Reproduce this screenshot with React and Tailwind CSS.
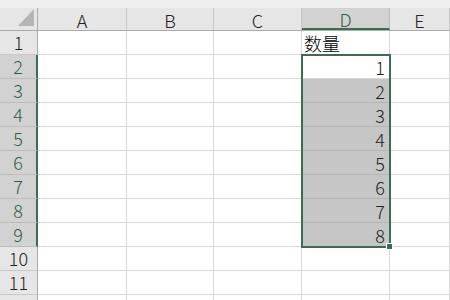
import React from "react";

const cols = ["A", "B", "C", "D", "E"];
const colW = ["w-[89px]", "w-[87px]", "w-[88px]", "w-[88px]", "flex-1"];
const rows = [1, 2, 3, 4, 5, 6, 7, 8, 9, 10, 11, 12];
const font = { fontFamily: '"Noto Sans CJK SC", "Noto Sans", sans-serif' };

function Cell({ row, col }) {
  const inSel = col === 3 && row >= 2 && row <= 9;
  const grey = col === 3 && row >= 3 && row <= 9;
  let content = null;
  if (col === 3 && row === 1) content = <span className="pl-[2px] text-[18px] leading-[22px] text-black">数量</span>;
  if (inSel) content = <span className="ml-auto pr-[4px] text-[18px] leading-[22px] text-[#222]">{row - 1}</span>;
  return (
    <div
      className={`${colW[col]} h-full flex items-end border-r border-[#d9d9d9] ${grey ? "bg-[#c6c6c6] border-b border-b-[#b4b4b4]" : "bg-white border-b border-b-[#d9d9d9]"}`}
    >
      {content}
    </div>
  );
}

export default function App() {
  return (
    <div className="relative w-[450px] h-[300px] overflow-hidden bg-white select-none font-light" style={font}>
      {/* strip above headers */}
      <div className="h-[8px] bg-[#efefef]" />
      {/* column headers */}
      <div className="flex h-[23px] bg-[#e6e6e6] border-b border-[#ababab]">
        <div className="w-[38px] h-full border-r border-[#ababab] flex items-end justify-end pr-[3px] pb-[4px]">
          <div className="w-0 h-0 border-l-[16px] border-l-transparent border-b-[17px] border-b-[#b5b5b5]" />
        </div>
        {cols.map((c, i) => (
          <div
            key={c}
            className={`${colW[i]} h-full flex items-center justify-center pt-[3px] border-r text-[18px] ${i === 3 ? "bg-[#d2d2d2] text-[#2f5f46] border-[#bdbdbd] border-b-2 border-b-[#3d6b53]" : "text-[#222] border-[#c8c8c8]"}`}
          >
            {c}
          </div>
        ))}
      </div>
      {/* rows */}
      {rows.map((r) => {
        const sel = r >= 2 && r <= 9;
        return (
          <div key={r} className="flex h-[24px]">
            <div
              className={`w-[38px] h-full flex items-center justify-center text-[18px] border-b ${sel ? "bg-[#d2d2d2] text-[#2f5f46] border-b-[#bdbdbd] border-r-2 border-r-[#3d6b53]" : "bg-[#e6e6e6] text-[#222] border-b-[#c8c8c8] border-r border-r-[#ababab]"}`}
            >
              {r < 12 ? r : ""}
            </div>
            {cols.map((c, i) => (
              <Cell key={c} row={r} col={i} />
            ))}
          </div>
        );
      })}
      {/* selection D2:D9 */}
      <div className="absolute left-[301px] top-[54px] w-[90px] h-[194px] border-2 border-[#3d6b53] pointer-events-none" />
      <div className="absolute left-[386px] top-[243px] w-[7px] h-[7px] bg-[#3d6b53] border border-white" />
    </div>
  );
}
